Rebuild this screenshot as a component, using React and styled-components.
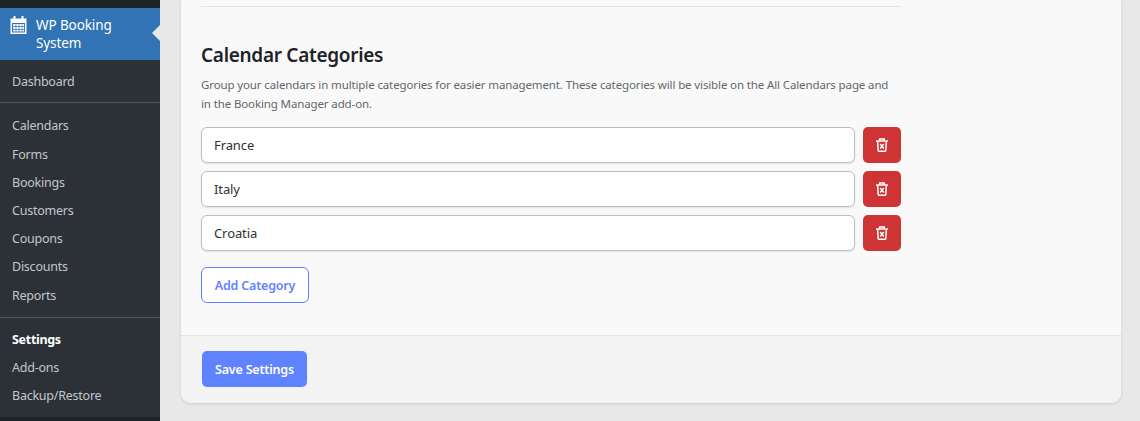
import React from "react";
import styled, { createGlobalStyle } from "styled-components";

const GlobalStyle = createGlobalStyle`
  html, body {
    margin: 0;
    padding: 0;
    height: 421px;
    overflow: hidden;
    background: #e8e8e8;
    font-family: "Noto Sans", "Open Sans", sans-serif;
  }
  * {
    box-sizing: border-box;
  }
`;

const Page = styled.div`
  display: flex;
  height: 421px;
  overflow: hidden;
`;

const Sidebar = styled.nav`
  width: 160px;
  flex-shrink: 0;
  height: 421px;
  background: #2c3138;
  border-top: 8px solid #1d2327;
  border-bottom: 4px solid #1d2327;
`;
const Brand = styled.div`
  position: relative;
  display: flex;
  height: 52px;
  padding: 8px 0 0 10px;
  background: #3173b5;
  color: #fff;
  font-size: 13.5px;
  letter-spacing: -0.1px;
  line-height: 18px;
`;
const BrandIcon = styled.svg`
  width: 18px;
  height: 18px;
  margin-right: 8px;
  flex-shrink: 0;
`;
const BrandArrow = styled.span`
  position: absolute;
  right: 0;
  top: 17px;
  border: 8px solid transparent;
  border-right-color: #e8e8e8;
  border-left-width: 0;
`;
const MenuGroup = styled.ul`
  list-style: none;
  margin: 0;
  padding: ${p => p.$padding};
  border-bottom: ${p => (p.$last ? "none" : "1px solid #50555b")};
`;
const MenuItem = styled.li`
  height: 28.18px;
  line-height: 28px;
  padding-left: 12px;
  font-size: 12.5px;
  letter-spacing: ${p => (p.$active ? "-0.3px" : "-0.24px")};
  font-weight: ${p => (p.$active ? 700 : 400)};
  color: ${p => (p.$active ? "#fff" : "#c3c6c9")};
`;

const Main = styled.main`
  flex: 1;
  padding: 0 19px 18px 21px;
`;
const Card = styled.section`
  height: 403px;
  display: flex;
  flex-direction: column;
  background: #f9f9f9;
  border-radius: 0 0 10px 10px;
  box-shadow: 0 1px 3px rgba(0, 0, 0, 0.13);
`;
const CardBody = styled.div`
  flex: 1;
  padding: 6px 20px 0;
`;
const Divider = styled.hr`
  width: 700px;
  height: 1px;
  margin: 0 0 34px;
  border: 0;
  background: #e3e3e3;
`;
const Title = styled.h2`
  margin: 0 0 7px;
  font-size: 19px;
  letter-spacing: -0.3px;
  line-height: 28px;
  font-weight: 600;
  color: #1d2327;
`;
const Description = styled.p`
  width: 695px;
  margin: 0 0 14px;
  font-size: 11.5px;
  letter-spacing: -0.125px;
  line-height: 18.5px;
  color: #62676c;
`;
const CategoryList = styled.div`
  display: flex;
  flex-direction: column;
  gap: 8px;
  width: 700px;
`;
const CategoryRow = styled.div`
  display: flex;
  gap: 8px;
`;
const CategoryInput = styled.div`
  flex: 1;
  height: 36px;
  padding: 0 12px;
  line-height: 34px;
  font-size: 13px;
  letter-spacing: -0.1px;
  color: #2c3338;
  background: #fff;
  border: 1px solid #bdbdbd;
  border-radius: 6px;
  box-shadow: 0 1px 2px rgba(0, 0, 0, 0.1);
`;
const DeleteButton = styled.button`
  display: flex;
  align-items: center;
  justify-content: center;
  width: 38px;
  height: 36px;
  padding: 0;
  border: 0;
  border-radius: 5px;
  background: #cf3434;
`;
const TrashIcon = styled.svg`
  width: 12px;
  height: 14px;
`;
const AddButton = styled.button`
  display: block;
  width: 108px;
  height: 36px;
  margin-top: 16px;
  padding: 0;
  font-family: inherit;
  font-size: 12.5px;
  letter-spacing: -0.2px;
  font-weight: 600;
  color: #5f82ff;
  background: #fff;
  border: 1px solid #5f82ff;
  border-radius: 6px;
`;
const CardFooter = styled.footer`
  height: 68px;
  padding: 15px 21px;
  background: #f3f3f3;
  border-top: 1px solid #e3e3e3;
  border-radius: 0 0 10px 10px;
`;
const SaveButton = styled.button`
  width: 105px;
  height: 36px;
  padding: 0;
  font-family: inherit;
  font-size: 12.5px;
  letter-spacing: -0.2px;
  font-weight: 600;
  color: #fff;
  background: #5f82ff;
  border: 0;
  border-radius: 5px;
`;

function CalendarIcon() {
  return (
    <BrandIcon viewBox="0 0 18 18">
      <path
        fill="#fff"
        fillRule="evenodd"
        d="M0.500 2.500h3V0.500a1 1 0 0 1 2 0v2h6V0.500a1 1 0 0 1 2 0v2h3v15.500h-16V2.500zM2 7v9.500h13V7H2z"
      />
      <path
        fill="#fff"
        d="M3.200 8h2.400v2.200H3.200zM6.300 8h2.400v2.200H6.300zM9.400 8h2.400v2.200H9.400zM12.300 8h1.800v2.200h-1.800zM3.200 11h2.400v2.200H3.200zM6.300 11h2.400v2.200H6.300zM9.400 11h2.400v2.200H9.400zM12.300 11h1.800v2.200h-1.800zM3.200 14h2.400v1.600H3.200zM6.300 14h2.400v1.600H6.300zM9.400 14h2.400v1.600H9.400zM12.300 14h1.800v1.600h-1.800z"
      />
    </BrandIcon>
  );
}

function Trash() {
  return (
    <TrashIcon viewBox="0 0 12 14" fill="none" stroke="#fff" strokeWidth="1.5">
      <path d="M0 3h12" />
      <path d="M3.700 3V0.900h4.600V3" />
      <path d="M1.600 3l0.600 9.500a0.900 0.900 0 0 0 0.900 0.800h5.800a0.900 0.900 0 0 0 0.900-0.800L10.400 3" />
      <path d="M4.200 6l3.600 4.500M7.800 6l-3.600 4.500" />
    </TrashIcon>
  );
}

const categories = ["France", "Italy", "Croatia"];

export default function App() {
  return (
    <Page>
      <GlobalStyle />
      <Sidebar>
        <Brand>
          <CalendarIcon />
          <span>
            WP Booking
            <br />
            System
          </span>
          <BrandArrow />
        </Brand>
        <MenuGroup $padding="8px 0 6px">
          <MenuItem>Dashboard</MenuItem>
        </MenuGroup>
        <MenuGroup $padding="9.320px 0 7.270px">
          <MenuItem>Calendars</MenuItem>
          <MenuItem>Forms</MenuItem>
          <MenuItem>Bookings</MenuItem>
          <MenuItem>Customers</MenuItem>
          <MenuItem>Coupons</MenuItem>
          <MenuItem>Discounts</MenuItem>
          <MenuItem>Reports</MenuItem>
        </MenuGroup>
        <MenuGroup $padding="8px 0" $last>
          <MenuItem $active>Settings</MenuItem>
          <MenuItem>Add-ons</MenuItem>
          <MenuItem>Backup/Restore</MenuItem>
        </MenuGroup>
      </Sidebar>
      <Main>
        <Card>
          <CardBody>
            <Divider />
            <Title>Calendar Categories</Title>
            <Description>
              Group your calendars in multiple categories for easier management. These categories will be visible on the All Calendars page and in the Booking Manager add-on.
            </Description>
            <CategoryList>
              {categories.map(name => (
                <CategoryRow key={name}>
                  <CategoryInput>{name}</CategoryInput>
                  <DeleteButton>
                    <Trash />
                  </DeleteButton>
                </CategoryRow>
              ))}
            </CategoryList>
            <AddButton>Add Category</AddButton>
          </CardBody>
          <CardFooter>
            <SaveButton>Save Settings</SaveButton>
          </CardFooter>
        </Card>
      </Main>
    </Page>
  );
}
